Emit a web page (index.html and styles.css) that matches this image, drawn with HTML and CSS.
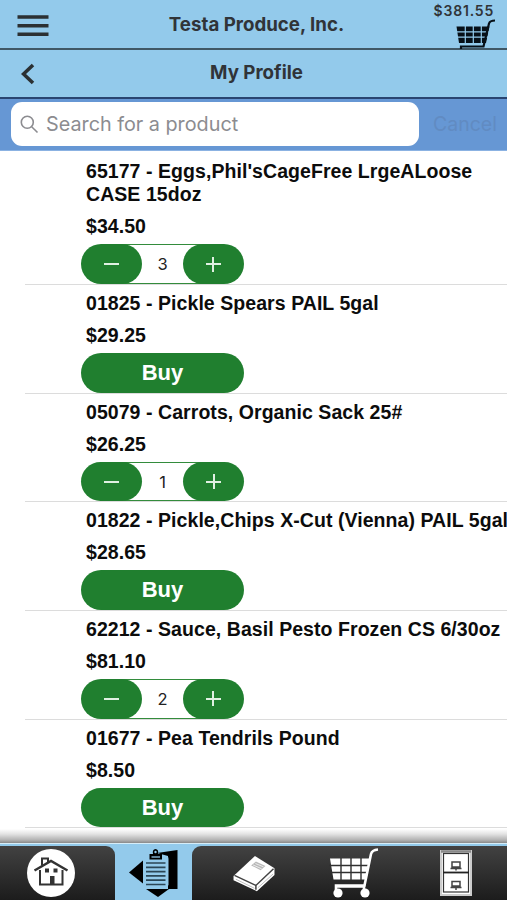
FILE: index.html
```html
<!DOCTYPE html>
<html lang="en">
  <head>
    <meta charset="utf-8" />
    <meta name="viewport" content="width=device-width, initial-scale=1.0" />
    <title>Testa Produce, Inc.</title>
    <link rel="stylesheet" href="styles.css">
  </head>
  <body>
    <header class="topbar">
      <svg class="menu" width="32" height="22" viewBox="0 0 32 22">
        <path d="M0.5 2h31M0.5 10.7h31M0.5 19.3h31" />
      </svg>
      <h1>Testa Produce, Inc.</h1>
      <div class="total">
        <span>$381.55</span>
        <svg width="40" height="30" viewBox="0 0 40 30">
          <path d="M0.5 7.5H33.5L30 24H3Z" />
          <path class="grid" d="M0 12.8H33M1 18.2H32M9.3 7V24M17.3 7V24M25.3 7V24" />
          <path class="frame" d="M39 1.5Q34 1.5 33 4.5L27.5 27.5H5V30" />
        </svg>
      </div>
    </header>

    <div class="subbar">
      <svg class="back" width="14" height="22" viewBox="0 0 14 22">
        <path d="M12 2L2.5 11L12 20" />
      </svg>
      <h2>My Profile</h2>
    </div>

    <div class="searchbar">
      <div class="search">
        <svg width="19" height="19" viewBox="0 0 19 19">
          <circle cx="7.3" cy="7.3" r="6" />
          <path d="M11.7 11.7L17.5 17.5" />
        </svg>
        <span>Search for a product</span>
      </div>
      <span class="cancel">Cancel</span>
    </div>

    <ul class="products">
      <li>
        <h3>65177 - Eggs,Phil'sCageFree LrgeALoose<br />CASE 15doz</h3>
        <p>$34.50</p>
        <div class="stepper">
          <button class="minus" aria-label="Less"></button><span>3</span><button class="plus" aria-label="More"></button>
        </div>
      </li>
      <li>
        <h3>01825 - Pickle Spears PAIL 5gal</h3>
        <p>$29.25</p>
        <button class="buy">Buy</button>
      </li>
      <li>
        <h3>05079 - Carrots, Organic Sack 25#</h3>
        <p>$26.25</p>
        <div class="stepper">
          <button class="minus" aria-label="Less"></button><span>1</span><button class="plus" aria-label="More"></button>
        </div>
      </li>
      <li>
        <h3>01822 - Pickle,Chips X-Cut (Vienna) PAIL 5gal</h3>
        <p>$28.65</p>
        <button class="buy">Buy</button>
      </li>
      <li>
        <h3>62212 - Sauce, Basil Pesto Frozen CS 6/30oz</h3>
        <p>$81.10</p>
        <div class="stepper">
          <button class="minus" aria-label="Less"></button><span>2</span><button class="plus" aria-label="More"></button>
        </div>
      </li>
      <li>
        <h3>01677 - Pea Tendrils Pound</h3>
        <p>$8.50</p>
        <button class="buy">Buy</button>
      </li>
    </ul>

    <footer>
      <div class="shade"></div>
      <nav class="tabs">
        <div class="tab first">
          <svg width="50" height="50" viewBox="0 0 50 50">
            <circle cx="25" cy="25" r="24" fill="#fff" />
            <g fill="none" stroke="#333" stroke-width="2">
              <path d="M14 22V36.5H36.5V22" />
              <path d="M8.5 22.5L25 13L41.5 22.5" stroke-width="2.4" />
              <path d="M16 17.5V10.5H22V14" />
            </g>
            <path d="M19 20.5h4v4h-4zM27.5 20.5h4v4h-4zM24 28h4.5v8H24z" fill="#333" />
          </svg>
        </div>
        <div class="tab active">
          <svg width="50" height="50" viewBox="0 0 50 50">
            <path d="M0 24.5L14 12.500V35.500Z" />
            <path d="M28 5L48.500 2V41H40L29 49L17 41H39V8Z" />
            <path d="M16 8H37Q39.500 8 39.500 11V37L37 40.500H16Z" fill="#93caeb" />
            <path d="M17 15H36.500M17 19.300H36.500M17 23.600H36.500M17 27.900H36.500M17 32.200H36.500M17 36.500H36.500" stroke="#2b4656" stroke-width="1.700" />
            <path d="M20.500 6H24Q23 1.500 26.500 1Q30 1.500 29 6H33V11.500H20.500Z" />
            <circle cx="26.500" cy="4" r="1.200" fill="#93caeb" />
            <path d="M22.500 9H31" stroke="#93caeb" stroke-width="1.300" />
          </svg>
        </div>
        <div class="tab second">
          <svg width="44" height="40" viewBox="0 0 46 42">
            <path d="M1.5 23L24 2L44.5 15V22L26 39L1.5 27.5Z" fill="#fff" />
            <path d="M2.5 22.5L25 33L43.5 15.5M25 33V37.5" fill="none" stroke="#444" stroke-width="1.6" />
            <path d="M4 26.5L23.5 36M27 35.5L43 21" stroke="#bbb" stroke-width="1" />
            <path d="M20 12L25 8L35 12.5L30 17Z" fill="#b9b9b9" />
            <path d="M22 11.5L31 15.5M24.5 10L33 13.5" stroke="#eee" stroke-width="1" />
          </svg>
        </div>
        <div class="tab">
          <svg width="50" height="50" viewBox="0 0 50 50">
            <path d="M1 10.5H41L37.5 31.5H4.5Z" fill="#fff" />
            <path d="M0 17.5H42M0 24.5H42M12 10V32M22 10V32M32 10V32" stroke="#303030" stroke-width="1.4" />
            <g fill="none" stroke="#fff" stroke-width="2.6">
              <path d="M49 1.5Q43 2 42 6L35.500 37.5H7V42" />
              <path d="M7 38.5H35V44" />
            </g>
            <circle cx="9" cy="45" r="4.6" fill="#fff" />
            <circle cx="36" cy="45" r="4.6" fill="#fff" />
          </svg>
        </div>
        <div class="tab">
          <svg width="32" height="46" viewBox="0 0 32 46">
            <rect x="1" y="1" width="30" height="44" fill="#fff" stroke="#ccc" stroke-width="2" />
            <path d="M1 1.500H31" stroke="#888" stroke-width="2.5" />
            <rect x="3.5" y="3.500" width="25" height="38.500" fill="none" stroke="#333" stroke-width="1.2" />
            <path d="M3 22.5H29" stroke="#222" stroke-width="1.800" />
            <g fill="none" stroke="#444" stroke-width="1.5">
              <path d="M12 12H20V17H12ZM10.5 18.500H21.5M16 17V20.5" />
              <path d="M12 31.500H20V36H12ZM10.5 37.500H21.5M16 36V40" />
            </g>
          </svg>
        </div>
      </nav>
    </footer>
  </body>
</html>
```
FILE: styles.css
```css
* {
  box-sizing: border-box;
}
body {
  margin: 0;
  height: 900px;
  display: flex;
  flex-direction: column;
  overflow: hidden;
  background: #fff;
  font-family: "Liberation Sans", Arial, sans-serif;
}
h1,
h2,
h3,
p,
ul {
  margin: 0;
  padding: 0;
}
svg {
  display: block;
}
.topbar,
.subbar {
  display: grid;
  grid-template-columns: 113px 1fr 107px;
  align-items: center;
  height: 50px;
  background: #93caeb;
  border-bottom: 2px solid #405866;
  color: #303438;
}
.subbar {
  height: 49px;
  border-bottom-color: #294571;
}
h1,
h2 {
  font-family: Inter, sans-serif;
  font-size: 18.7px;
  font-weight: 700;
  text-align: center;
  line-height: 24px;
  white-space: nowrap;
}
h2 {
  padding-bottom: 1px;
}
.menu {
  margin: 3px 0 0 17px;
  fill: none;
  stroke: #2b3033;
  stroke-width: 3.4;
}
.back {
  margin: 0 0 0 21px;
  fill: none;
  stroke: #2b3033;
  stroke-width: 3.6;
}
.total {
  align-self: start;
  display: flex;
  flex-direction: column;
  align-items: flex-end;
  padding: 3px 12px 0 0;
  font-family: Inter, sans-serif;
  font-size: 14px;
  font-weight: 600;
  line-height: 16px;
  letter-spacing: 0.8px;
}
.total span {
  margin-right: 1px;
}
.total svg {
  margin-right: -1px;
  fill: #071018;
}
.total .grid {
  stroke: #93caeb;
  stroke-width: 1.2;
}
.total .frame {
  fill: none;
  stroke: #071018;
  stroke-width: 2.2;
}
.searchbar {
  display: flex;
  align-items: center;
  height: 52px;
  padding: 0 10px 1px 11px;
  background: #6697d4;
  border-bottom: 1px solid #8bb2e2;
}
.search {
  display: flex;
  flex: none;
  align-items: center;
  gap: 7px;
  width: 408px;
  height: 44px;
  padding-left: 9px;
  background: #fff;
  border-radius: 11px;
  color: #8c8c90;
  font-family: Inter, sans-serif;
  font-size: 19.8px;
}
.search svg {
  fill: none;
  stroke: #8c8c90;
  stroke-width: 1.6;
}
.cancel {
  margin-left: 14px;
  color: #618bc2;
  font-family: Inter, sans-serif;
  font-size: 19.5px;
}
.products {
  flex: 1;
  padding: 2.3px 0 0 25px;
  list-style: none;
}
.products li {
  padding: 7px 0 0 56px;
  border-bottom: 1px solid #dcdcdc;
}
.products h3,
.products p {
  padding-left: 5px;
  font-size: 19.5px;
  font-weight: bold;
  line-height: 23px;
  letter-spacing: 0.06px;
  color: #0c0c0c;
  white-space: nowrap;
}
.products p {
  margin: 9px 0 6px;
}
.buy,
.stepper {
  display: flex;
  align-items: center;
  width: 163px;
  height: 39.7px;
}
.buy {
  justify-content: center;
  border-radius: 20px;
  font-family: "Liberation Sans", Arial, sans-serif;
  font-size: 22px;
  font-weight: bold;
}
.stepper {
  justify-content: space-between;
  background: linear-gradient(#338c3c, #338c3c) center top / 110px 1px no-repeat,
    linear-gradient(#338c3c, #338c3c) center bottom / 110px 1px no-repeat;
}
.stepper span {
  font-family: Inter, sans-serif;
  font-size: 16.5px;
  color: #222;
}
button {
  border: 0;
  padding: 0;
  background: #207f2f;
  color: #fff;
}
.minus,
.plus {
  display: grid;
  place-items: center;
  width: 61px;
  height: 39.7px;
  border-radius: 20px;
}
.minus::before,
.plus::before,
.plus::after {
  content: "";
  grid-area: 1 / 1;
  width: 15px;
  height: 2px;
  background: #e0f0e2;
}
.plus::after {
  width: 2px;
  height: 15px;
}
footer {
  flex: none;
}
.shade {
  height: 14px;
  background: linear-gradient(#fff, #e4e4e4 35%, #b0b0b0 80%, #888);
}
.tabs {
  display: grid;
  grid-template-columns: 115px 77px 124px 76px 115px;
  height: 57px;
  border-top: 1px solid #d6edf8;
  background: #93caeb;
}
.tab {
  display: flex;
  justify-content: center;
  margin-top: 2px;
  background: linear-gradient(#424242, #1c1c1c);
}
.tab.active {
  background: #93caeb;
}
.first {
  border-top-right-radius: 9px;
  padding-right: 13px;
}
.second {
  border-top-left-radius: 9px;
}
.tab svg {
  margin-top: 2px;
}
.tab.second svg {
  margin-top: 8px;
}
.tab:last-child svg {
  margin: 4px 0 0 13px;
}
```
